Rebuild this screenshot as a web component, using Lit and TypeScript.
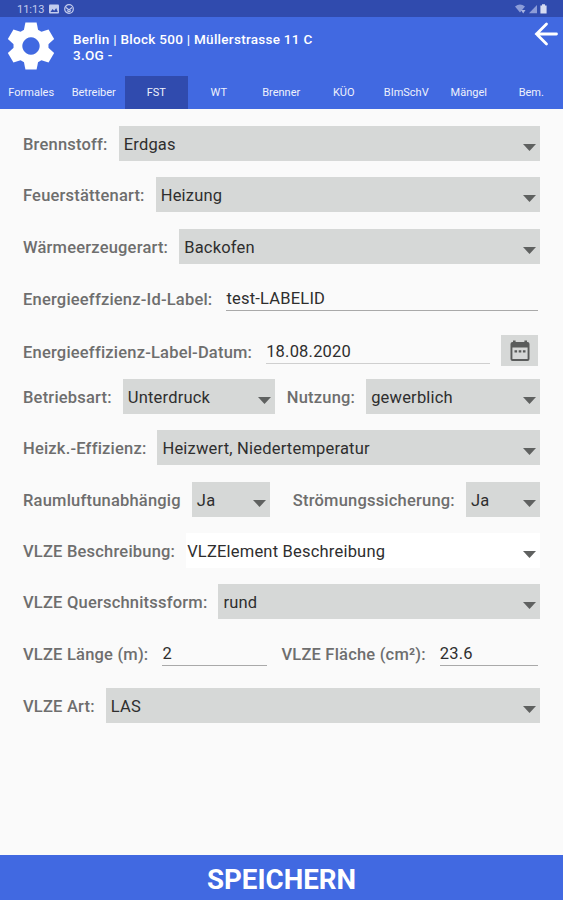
import { LitElement, html, svg, css } from "lit";
import { customElement, property } from "lit/decorators.js";
import { classMap } from "lit/directives/class-map.js";

@customElement("select-field")
class SelectField extends LitElement {
  @property() value = "";

  static styles = css`
    :host {
      display: flex;
      align-items: center;
      justify-content: space-between;
      height: 35px;
      box-sizing: border-box;
      padding: 0 4px 0 5px;
      background: #d6d8d7;
      color: #2e2e2e;
      font-size: 16.5px;
      letter-spacing: 0.2px;
      white-space: nowrap;
    }
    .value {
      line-height: 20px;
      margin-top: 2px;
    }
    .arrow {
      width: 13px;
      height: 7px;
      margin-top: 7px;
      fill: #5f6160;
      flex: none;
    }
  `;

  render() {
    return html`<span class="value">${this.value}</span>
      <svg class="arrow" viewBox="0 0 13 7"><path d="M0 0h13L6.5 7z" /></svg>`;
  }
}

@customElement("text-field")
class TextField extends LitElement {
  @property() value = "";

  static styles = css`
    :host {
      display: block;
      box-sizing: border-box;
      height: 30px;
      margin-bottom: 5px;
      border-bottom: 1px solid #a9a9a9;
      color: #2e2e2e;
      font-size: 16.5px;
      letter-spacing: 0.2px;
      line-height: 36px;
      white-space: nowrap;
    }
  `;

  render() {
    return html`${this.value}`;
  }
}

const TABS = ["Formales", "Betreiber", "FST", "WT", "Brenner", "KÜO", "BImSchV", "Mängel", "Bem."];

const gearTeeth = [0, 60, 120, 180, 240, 300].map(
  (a) => svg`<path d="M-5.6 -23.5h11.2l1.8 9h-14.8z" transform="rotate(${a})" />`
);

@customElement("app-root")
class AppRoot extends LitElement {
  static styles = css`
    :host {
      display: flex;
      flex-direction: column;
      height: 900px;
      background: #fafafa;
      font-family: Roboto, sans-serif;
      overflow: hidden;
    }
    .status {
      display: flex;
      align-items: center;
      height: 17px;
      padding: 0 16px 0 17px;
      background: #304bae;
      color: #c3cced;
      font-size: 11px;
    }
    .status svg {
      flex: none;
    }
    .clock {
      width: 32px;
      line-height: 17px;
      padding-top: 1px;
    }
    .status-left {
      display: flex;
      flex: 1;
      gap: 5px;
    }
    .status-right {
      display: flex;
      gap: 3px;
    }
    .head {
      display: flex;
      height: 59px;
      background: #4169e1;
      color: #fff;
    }
    .gear {
      width: 48px;
      height: 48px;
      margin: 5px 0 0 7px;
      fill: #fff;
    }
    .title {
      flex: 1;
      margin: 14px 0 0 18px;
      font-size: 13.5px;
      font-weight: 500;
      line-height: 16px;
      letter-spacing: 0.28px;
    }
    .back {
      width: 24px;
      height: 24px;
      margin: 5px 5px 0 0;
      fill: none;
      stroke: #fff;
      stroke-width: 2.8;
      stroke-linecap: round;
    }
    .tabs {
      display: grid;
      grid-template-columns: repeat(9, 62.5px);
      height: 33px;
      background: #4169e1;
      color: #eef1fc;
      font-size: 11px;
      line-height: 34px;
      text-align: center;
    }
    .tab.active {
      height: 33px;
      background: #304bae;
    }
    .form {
      flex: 1;
      display: grid;
      grid-template-rows: 51px 52px 52px 53px 45px 51px 52px 51px 51px 52px 52px 35px;
      align-content: start;
      padding: 17px 23px 0;
    }
    .row {
      display: flex;
      align-items: center;
      height: 35px;
    }
    .label {
      color: #6e6e6e;
      font-size: 16.5px;
      font-weight: 500;
      line-height: 20px;
      letter-spacing: 0.2px;
      white-space: nowrap;
      margin-top: 2px;
    }
    select-field {
      flex: 1;
      margin-left: 11px;
    }
    text-field {
      flex: 1;
      margin-left: 14px;
      margin-right: 2px;
    }
    .plain {
      background: #fff;
      padding-left: 1px;
    }
    .date {
      margin-right: 11px;
      border-color: #cfcfcf;
    }
    .mode {
      flex: none;
      width: 152px;
      margin-right: 12px;
    }
    .airflow {
      flex: none;
      width: 78px;
      margin-right: 23px;
    }
    .length {
      flex: none;
      width: 105px;
      margin-right: 14px;
    }
    .calendar {
      display: grid;
      place-items: center;
      width: 37px;
      height: 31px;
      margin: 0 2px 2px 0;
      background: #d6d8d7;
    }
    .save {
      height: 45px;
      background: #4169e1;
      color: #fff;
      font-size: 27.7px;
      font-weight: 700;
      line-height: 49px;
      text-align: center;
    }
  `;

  render() {
    return html`
      <div class="status">
        <span class="clock">11:13</span>
        <div class="status-left">
          <svg width="10" height="10" viewBox="0 0 10 10">
            <rect width="10" height="9" y=".5" rx="1" fill="#c3cced" />
            <path d="M1.4 8 3.6 5l1.6 1.8L7.2 4l1.6 4z" fill="#304bae" />
          </svg>
          <svg width="10" height="10" viewBox="0 0 10 10" fill="none" stroke="#c3cced" stroke-width="1.2">
            <circle cx="5" cy="5" r="4.3" />
            <path d="M2 3.5 5 6l3-2.5M3 6.5l2 1.2 2-1.2" />
          </svg>
        </div>
        <div class="status-right">
          <svg width="11" height="10" viewBox="0 0 11 10" fill="#8c9cd8">
            <path d="M0 2.6Q5-1.4 10 2.6L5 8.6z" />
            <path d="M6 6h4.5L8.2 9.5z" fill="#a9b5e2" />
          </svg>
          <svg width="8" height="10" viewBox="0 0 8 10"><path d="M0 9.3 8 1v8.3z" fill="#8c9cd8" /></svg>
          <svg width="7" height="10" viewBox="0 0 7 10">
            <path d="M2 .3h3v1.2h1.6v8H.4v-8H2z" fill="#d5dbf2" />
          </svg>
        </div>
      </div>
      <div class="head">
        <svg class="gear" viewBox="-24 -24 48 48">
          ${gearTeeth}
          <path fill-rule="evenodd" d="M0-17.5a17.5 17.5 0 1 0 .01 0zM0-8.7a8.7 8.7 0 1 1-.01 0z" />
        </svg>
        <div class="title">Berlin | Block 500 | Müllerstrasse 11 C<br />3.OG -</div>
        <svg class="back" viewBox="0 0 24 24"><path d="M22.5 12H2.5M12.5 2 2.5 12l10 10" /></svg>
      </div>
      <div class="tabs">
        ${TABS.map((t) => html`<div class=${classMap({ tab: true, active: t === "FST" })}>${t}</div>`)}
      </div>
      <div class="form">
        <div class="row">
          <span class="label">Brennstoff:</span><select-field value="Erdgas"></select-field>
        </div>
        <div class="row">
          <span class="label">Feuerstättenart:</span><select-field value="Heizung"></select-field>
        </div>
        <div class="row">
          <span class="label">Wärmeerzeugerart:</span><select-field value="Backofen"></select-field>
        </div>
        <div class="row">
          <span class="label">Energieeffzienz-Id-Label:</span><text-field value="test-LABELID"></text-field>
        </div>
        <div class="row">
          <span class="label">Energieeffizienz-Label-Datum:</span>
          <text-field class="date" value="18.08.2020"></text-field>
          <div class="calendar">
            <svg width="20" height="22" viewBox="0 0 20 22">
              <path
                fill="#5a5c5b"
                fill-rule="evenodd"
                d="M3 .5h2.6V2h8.8V.5H17V2h.5Q19.5 2 19.5 4v15q0 2-2 2h-15q-2 0-2-2V4q0-2 2-2H3zM2.4 7.5V19h15.2V7.5z"
              />
              <path fill="#5a5c5b" d="M4.5 10.3h2.6v2.2H4.5zM8.7 10.3h2.6v2.2H8.7zM12.9 10.3h2.6v2.2h-2.6z" />
            </svg>
          </div>
        </div>
        <div class="row">
          <span class="label">Betriebsart:</span><select-field class="mode" value="Unterdruck"></select-field>
          <span class="label">Nutzung:</span><select-field value="gewerblich"></select-field>
        </div>
        <div class="row">
          <span class="label">Heizk.-Effizienz:</span
          ><select-field value="Heizwert, Niedertemperatur"></select-field>
        </div>
        <div class="row">
          <span class="label">Raumluftunabhängig</span><select-field class="airflow" value="Ja"></select-field>
          <span class="label">Strömungssicherung:</span><select-field value="Ja"></select-field>
        </div>
        <div class="row">
          <span class="label">VLZE Beschreibung:</span
          ><select-field class="plain" value="VLZElement Beschreibung"></select-field>
        </div>
        <div class="row">
          <span class="label">VLZE Querschnitssform:</span><select-field value="rund"></select-field>
        </div>
        <div class="row">
          <span class="label">VLZE Länge (m):</span><text-field class="length" value="2"></text-field>
          <span class="label">VLZE Fläche (cm²):</span><text-field value="23.6"></text-field>
        </div>
        <div class="row">
          <span class="label">VLZE Art:</span><select-field value="LAS"></select-field>
        </div>
      </div>
      <div class="save">SPEICHERN</div>
    `;
  }
}
